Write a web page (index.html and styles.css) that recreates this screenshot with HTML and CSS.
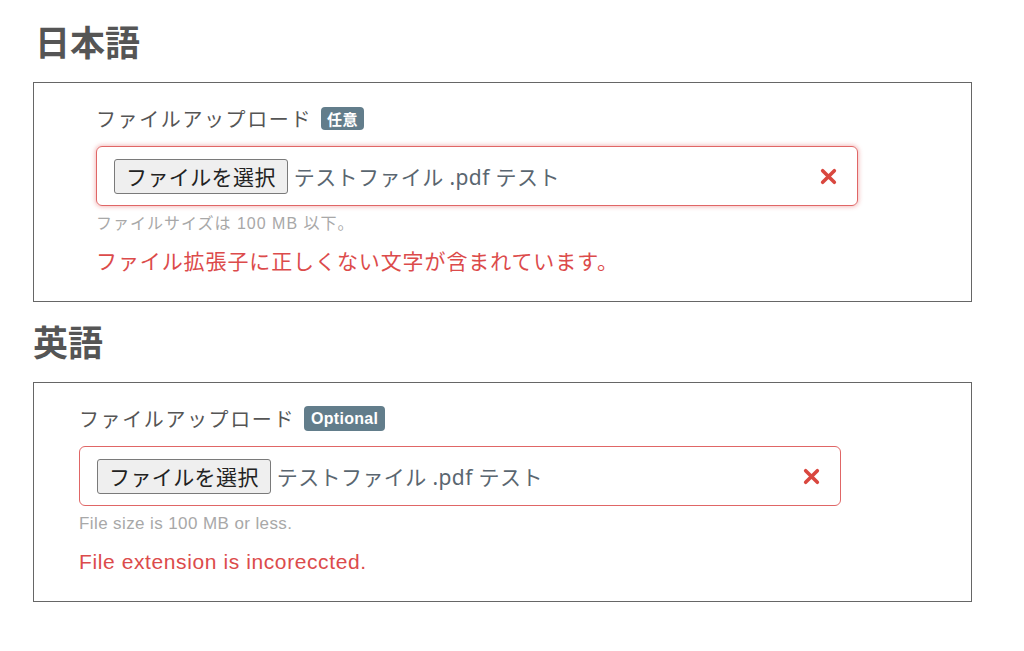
FILE: index.html
```html
<!DOCTYPE html>
<html lang="ja">
<head>
<meta charset="utf-8">
<title>ファイルアップロード</title>
<link rel="stylesheet" href="styles.css">
</head>
<body>
<main class="page">
  <section class="section">
    <h2 class="heading">日本語</h2>
    <div class="panel panel-ja">
      <div class="label-row">
        <span class="label">ファイルアップロード</span>
        <span class="badge">任意</span>
      </div>
      <div class="file-input is-focused">
        <span class="file-btn">ファイルを選択</span>
        <span class="file-name">テストファイル .pdf テスト</span>
        <svg class="clear" width="17" height="17" viewBox="0 0 16 16" aria-hidden="true"><path d="M2.5 2.5 L13.5 13.5 M13.5 2.5 L2.5 13.5" stroke="#d9473f" stroke-width="3.4" stroke-linecap="round" fill="none"/></svg>
      </div>
      <p class="help">ファイルサイズは 100 MB 以下。</p>
      <p class="error">ファイル拡張子に正しくない文字が含まれています。</p>
    </div>
  </section>
  <section class="section">
    <h2 class="heading">英語</h2>
    <div class="panel panel-en">
      <div class="label-row">
        <span class="label">ファイルアップロード</span>
        <span class="badge badge-en">Optional</span>
      </div>
      <div class="file-input">
        <span class="file-btn">ファイルを選択</span>
        <span class="file-name">テストファイル .pdf テスト</span>
        <svg class="clear" width="17" height="17" viewBox="0 0 16 16" aria-hidden="true"><path d="M2.5 2.5 L13.5 13.5 M13.5 2.5 L2.5 13.5" stroke="#d9473f" stroke-width="3.4" stroke-linecap="round" fill="none"/></svg>
      </div>
      <p class="help help-en">File size is 100 MB or less.</p>
      <p class="error error-en">File extension is incoreccted.</p>
    </div>
  </section>
</main>
</body>
</html>
```

FILE: styles.css
```css
* { box-sizing: border-box; }
html, body { margin: 0; padding: 0; background: #fff; }
body {
  font-family: "Noto Sans", "Noto Sans CJK JP", sans-serif;
  color: #555;
}
.page {
  padding: 20px 0 0 33px;
  width: 972px;
}
.section { display: flex; flex-direction: column; }
.heading {
  margin: 0;
  font-family: "Noto Sans CJK JP", sans-serif;
  font-size: 35px;
  font-weight: 700;
  line-height: 42px;
  color: #555;
  padding-left: 2px;
  margin-bottom: 20px;
}
.section + .section .heading { margin-top: 18px; padding-left: 0; }
.panel {
  border: 1px solid #666;
  height: 220px;
  padding: 19px 0 0 62px;
}
.panel-en { padding-left: 45px; }
.label-row {
  display: flex;
  align-items: center;
  gap: 9px;
  height: 32px;
}
.label {
  font-family: "Noto Sans CJK JP", sans-serif;
  font-size: 20px;
  letter-spacing: 1.6px;
  color: #555;
}
.badge {
  background: #627d8b;
  color: #fff;
  font-family: "Noto Sans CJK JP", sans-serif;
  font-size: 15px;
  font-weight: 700;
  height: 23px;
  line-height: 23px;
  padding: 0 6px;
  border-radius: 4px;
  letter-spacing: 0.5px;
}
.badge-en {
  font-family: "Liberation Sans", "Noto Sans", sans-serif;
  font-size: 16px;
  height: 25px;
  line-height: 25px;
  padding: 0 7px;
  letter-spacing: 0.3px;
}
.file-input {
  margin-top: 12px;
  width: 762px;
  height: 60px;
  border: 1.5px solid #e06666;
  border-radius: 6px;
  display: flex;
  align-items: center;
  padding: 0 20px 0 17px;
}
.is-focused { box-shadow: 0 0 4px 1px rgba(225, 90, 90, 0.4); }
.file-btn {
  height: 35px;
  line-height: 33px;
  padding: 0 11px;
  border: 1px solid #7a7a7a;
  border-radius: 3px;
  background: #efefef;
  color: #222;
  font-family: "Noto Sans CJK JP", sans-serif;
  font-size: 21px;
  letter-spacing: 0.4px;
}
.file-name {
  margin-left: 6px;
  flex: 1;
  font-family: "Noto Sans", "Noto Sans CJK JP", sans-serif;
  font-size: 21px;
  color: #5a6670;
  letter-spacing: 0.4px;
}
.clear { flex: none; }
.help {
  margin: 6px 0 0;
  font-family: "Liberation Sans", "Noto Sans CJK JP", sans-serif;
  font-size: 16px;
  line-height: 24px;
  letter-spacing: 1px;
  color: #a8a8a8;
}
.error {
  margin: 11px 0 0;
  font-family: "Liberation Sans", "Noto Sans CJK JP", sans-serif;
  font-size: 21px;
  line-height: 30px;
  letter-spacing: 0.9px;
  color: #dc4b4b;
}
.help-en { font-size: 17px; letter-spacing: 0.4px; }
.error-en { letter-spacing: 0.6px; }
```
